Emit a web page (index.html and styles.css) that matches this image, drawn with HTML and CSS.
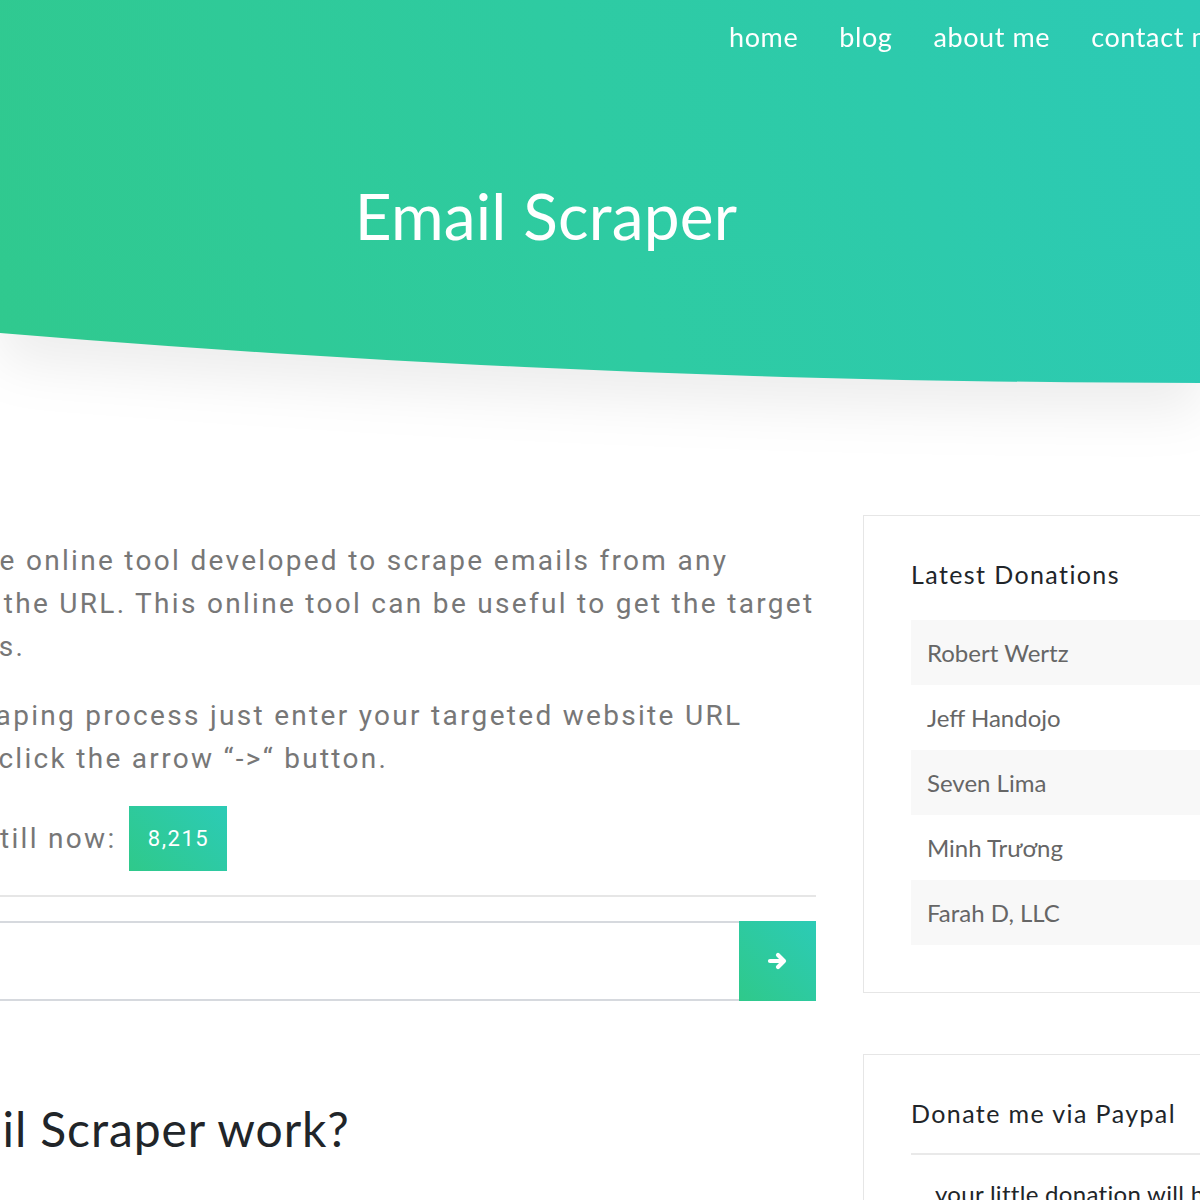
FILE: index.html
```html
<!DOCTYPE html>
<html lang="en">
<head>
<meta charset="utf-8">
<title>Email Scraper</title>
<link rel="stylesheet" href="styles.css">
</head>
<body>
<header class="hero-wrap">
  <div class="hero">
    <nav class="nav">
      <a href="#">home</a>
      <a href="#">blog</a>
      <a href="#">about me</a>
      <a href="#">contact me</a>
    </nav>
    <div class="container">
      <h1 class="title">Email Scraper</h1>
    </div>
  </div>
</header>

<main class="main">
  <section class="content">
    <p class="lead">Email Scraper is a free online tool developed to scrape emails from any<br>website just by using the URL. This online tool can be useful to get the target<br>client email addresses.</p>
    <p class="lead">To start off email scraping process just enter your targeted website URL<br>in the input field and click the arrow “-&gt;“ button.</p>
    <p class="lead count">Total emails scraped till now: <span class="badge">8,215</span></p>
    <hr class="rule">
    <form class="search">
      <input class="search-input" type="text" aria-label="Website URL">
      <button class="search-btn" type="button" aria-label="Scrape">
        <svg width="22" height="20" viewBox="0 0 22 20"><path d="M3 10 H17 M11 4 L17 10 L11 16" fill="none" stroke="#fff" stroke-width="4.2" stroke-linecap="round" stroke-linejoin="round"/></svg>
      </button>
    </form>
    <h2 class="how">How does Email Scraper work?</h2>
  </section>

  <aside class="sidebar">
    <div class="card">
      <h3 class="card-title">Latest Donations</h3>
      <ul class="donors">
        <li>Robert Wertz</li>
        <li>Jeff Handojo</li>
        <li>Seven Lima</li>
        <li>Minh Trương</li>
        <li>Farah D, LLC</li>
      </ul>
    </div>
    <div class="card card-paypal">
      <h3 class="card-title">Donate me via Paypal</h3>
      <hr class="card-rule">
      <p class="card-text">your little donation will help me keep this site running</p>
    </div>
  </aside>
</main>
</body>
</html>
```
FILE: styles.css
```css
html, body {
  margin: 0;
  padding: 0;
  overflow-x: hidden;
  background: #fff;
}
body {
  font-family: "Lato", "Noto Sans", sans-serif;
  color: #212529;
}

.hero-wrap {
  filter: drop-shadow(0 28px 26px rgba(0, 0, 0, 0.07));
}
.hero {
  height: 383px;
  background: linear-gradient(75deg, #30c98e 0%, #2ecba2 50%, #2ccab6 100%);
  clip-path: path("M0 0 H1200 V383 Q600 383 0 333 Z");
  overflow: hidden;
}

.nav {
  display: flex;
  gap: 41px;
  padding: 18px 0 0 729px;
  white-space: nowrap;
}
.nav a {
  color: #fff;
  text-decoration: none;
  font-size: 27px;
  line-height: 38px;
  letter-spacing: 0.6px;
}

.container {
  width: 1710px;
  margin-left: -309px;
  text-align: center;
}
.title {
  margin: 120px 0 0;
  font-size: 64px;
  font-weight: 400;
  line-height: 80px;
  color: #fff;
  letter-spacing: 0.2px;
}

.main {
  display: flex;
  gap: 47px;
  margin-left: -314px;
  padding-top: 132px;
  width: 1702px;
}
.content {
  width: 1130px;
  flex: none;
  padding-top: 24px;
}
.lead {
  margin: 0 0 26px;
  font-family: "Roboto", "Noto Sans", sans-serif;
  font-size: 28px;
  line-height: 43px;
  letter-spacing: 2.3px;
  color: #777;
  white-space: nowrap;
}
.count {
  display: flex;
  align-items: center;
  gap: 13px;
  margin-bottom: 0;
}
.badge {
  display: inline-flex;
  align-items: center;
  justify-content: center;
  width: 98px;
  height: 65px;
  background: linear-gradient(45deg, #2fc98a, #2ccbb6);
  color: #fff;
  font-size: 22px;
  letter-spacing: 1.5px;
}
.rule {
  margin: 24px 0 0;
  border: 0;
  border-top: 2px solid #e6e6e6;
}
.search {
  display: flex;
  margin-top: 24px;
  height: 80px;
}
.search-input {
  flex: 1;
  border: 2px solid #d6d9de;
  border-right: 0;
  outline: none;
  background: #fff;
  font-size: 24px;
  margin: 0;
}
.search-btn {
  width: 77px;
  border: 0;
  margin: 0;
  padding: 0;
  background: linear-gradient(45deg, #2fc98a, #2ccbb6);
  display: flex;
  align-items: center;
  justify-content: center;
  cursor: pointer;
}
.how {
  margin: 98px 0 0 -9px;
  font-size: 48px;
  font-weight: 400;
  line-height: 60px;
  letter-spacing: 0.9px;
  color: #212529;
  white-space: nowrap;
}

.sidebar {
  width: 525px;
  flex: none;
  display: flex;
  flex-direction: column;
  gap: 61px;
}
.card {
  border: 1px solid #e6e6e6;
  padding: 43px 47px 47px;
}
.card-title {
  margin: 0;
  font-size: 25px;
  font-weight: 400;
  line-height: 30px;
  letter-spacing: 1.4px;
  color: #212529;
}
.donors {
  list-style: none;
  margin: 31px 0 0;
  padding: 0;
}
.donors li {
  height: 65px;
  display: flex;
  align-items: center;
  padding-left: 16px;
  font-size: 24px;
  color: #666;
}
.donors li:nth-child(odd) {
  background: #f8f8f8;
}
.card-paypal {
  padding-top: 43px;
  padding-bottom: 60px;
}
.card-rule {
  margin: 25px 0 0;
  border: 0;
  border-top: 2px solid #e9e9e9;
}
.card-text {
  margin: 22px 0 0 24px;
  font-size: 24px;
  line-height: 34px;
  letter-spacing: 0.3px;
  color: #212529;
  white-space: nowrap;
}
```
